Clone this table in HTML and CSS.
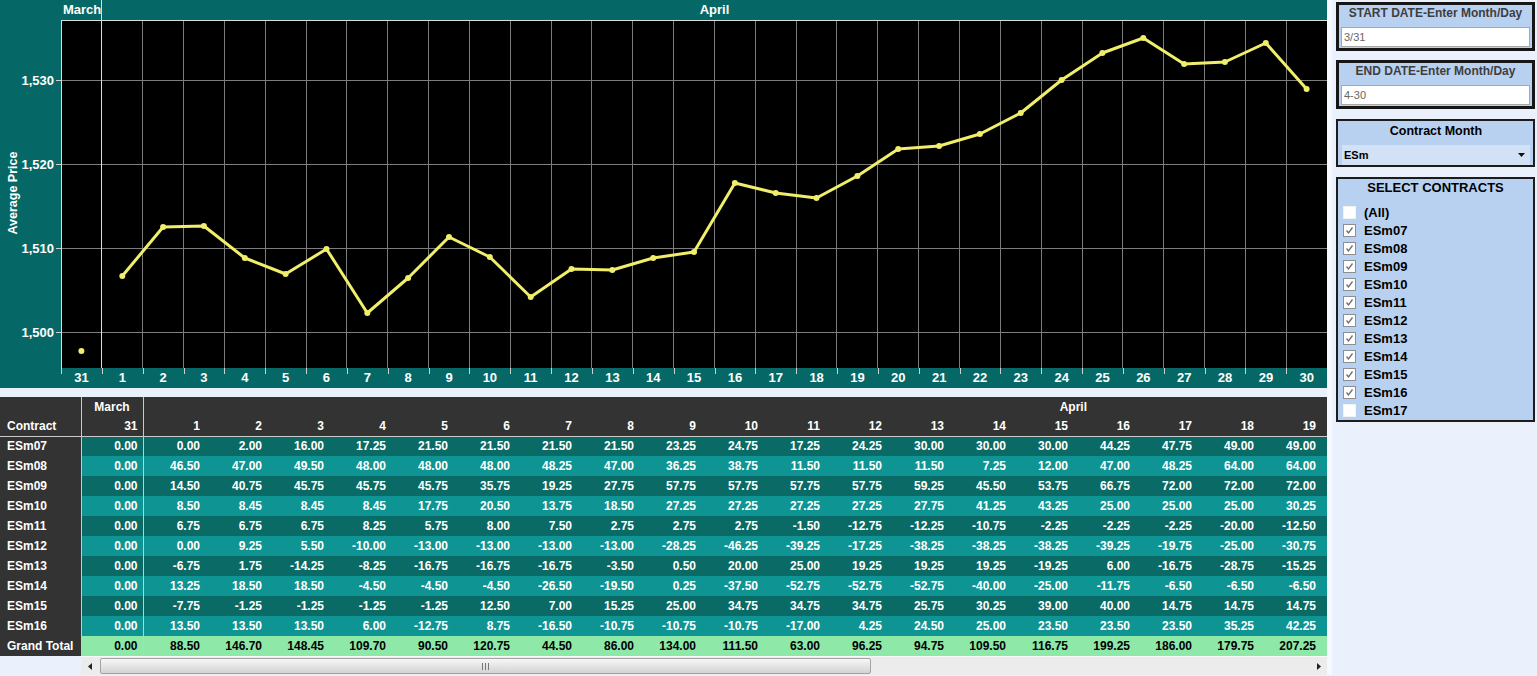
FILE: index.html
```html
<!DOCTYPE html>
<html>
<head>
<meta charset="utf-8">
<title>Average Price</title>
<link rel="stylesheet" href="styles.css">
</head>
<body>
<div class="page">
  <div class="main">
    <div class="chart">
      <div class="chart-head">
        <div class="head-march">March</div>
        <div class="head-april">April</div>
      </div>
      <svg class="yaxis" width="61" height="347" viewBox="0 0 61 347">
        <path d="M56 59.5H61M56 143.5H61M56 227.5H61M56 311.5H61" stroke="#d0d0d0" stroke-width="1"/>
        <g fill="#fff" font-size="13" font-weight="bold" text-anchor="end">
          <text x="54" y="64">1,530</text>
          <text x="54" y="148">1,520</text>
          <text x="54" y="232">1,510</text>
          <text x="54" y="316">1,500</text>
        </g>
        <text transform="translate(17,172) rotate(-90)" fill="#fff" font-size="12.5" font-weight="bold" text-anchor="middle">Average Price</text>
      </svg>
      <svg class="plot" width="1266" height="347" viewBox="0 0 1266 347">
        <rect x="0" y="0" width="1266" height="347" fill="#000"/>
        <path d="M0 59.5H1266M0 143.5H1266M0 227.5H1266M0 311.5H1266" stroke="#7c7c7c" stroke-width="1" shape-rendering="crispEdges"/>
        <path d="M81.5 0V347M122.5 0V347M163.5 0V347M204.5 0V347M245.5 0V347M285.5 0V347M326.5 0V347M367.5 0V347M408.5 0V347M449.5 0V347M490.5 0V347M530.5 0V347M571.5 0V347M612.5 0V347M653.5 0V347M694.5 0V347M735.5 0V347M775.5 0V347M816.5 0V347M857.5 0V347M898.5 0V347M939.5 0V347M980.5 0V347M1021.5 0V347M1061.5 0V347M1102.5 0V347M1143.5 0V347M1184.5 0V347M1225.5 0V347" stroke="#7c7c7c" stroke-width="1" shape-rendering="crispEdges"/>
        <path d="M0.5 0V347M40.5 0V347" stroke="#dcdcdc" stroke-width="1" shape-rendering="crispEdges"/>
        <polyline fill="none" stroke="#f0ee6a" stroke-width="3" stroke-linejoin="round" points="61.3,255 102.1,206 142.9,205 183.8,237 224.6,253 265.5,228 306.3,292 347.1,257 388.0,216 428.8,236 469.7,276 510.5,248 551.3,249 592.2,237 633.0,231 673.9,162 714.7,172 755.5,177 796.4,155 837.2,128 878.1,125 918.9,113 959.7,92 1000.6,59 1041.4,32 1082.3,17 1123.1,43 1163.9,41 1204.8,22 1245.6,68"/>
        <g fill="#f0ee6a">
          <circle cx="20.4" cy="330" r="3"/>
          <circle cx="61.3" cy="255" r="3"/><circle cx="102.1" cy="206" r="3"/><circle cx="142.9" cy="205" r="3"/>
          <circle cx="183.8" cy="237" r="3"/><circle cx="224.6" cy="253" r="3"/><circle cx="265.5" cy="228" r="3"/>
          <circle cx="306.3" cy="292" r="3"/><circle cx="347.1" cy="257" r="3"/><circle cx="388.0" cy="216" r="3"/>
          <circle cx="428.8" cy="236" r="3"/><circle cx="469.7" cy="276" r="3"/><circle cx="510.5" cy="248" r="3"/>
          <circle cx="551.3" cy="249" r="3"/><circle cx="592.2" cy="237" r="3"/><circle cx="633.0" cy="231" r="3"/>
          <circle cx="673.9" cy="162" r="3"/><circle cx="714.7" cy="172" r="3"/><circle cx="755.5" cy="177" r="3"/>
          <circle cx="796.4" cy="155" r="3"/><circle cx="837.2" cy="128" r="3"/><circle cx="878.1" cy="125" r="3"/>
          <circle cx="918.9" cy="113" r="3"/><circle cx="959.7" cy="92" r="3"/><circle cx="1000.6" cy="59" r="3"/>
          <circle cx="1041.4" cy="32" r="3"/><circle cx="1082.3" cy="17" r="3"/><circle cx="1123.1" cy="43" r="3"/>
          <circle cx="1163.9" cy="41" r="3"/><circle cx="1204.8" cy="22" r="3"/><circle cx="1245.6" cy="68" r="3"/>
        </g>
      </svg>
      <div class="xaxis">
        <span>31</span><span>1</span><span>2</span><span>3</span><span>4</span><span>5</span><span>6</span><span>7</span><span>8</span><span>9</span><span>10</span><span>11</span><span>12</span><span>13</span><span>14</span><span>15</span><span>16</span><span>17</span><span>18</span><span>19</span><span>20</span><span>21</span><span>22</span><span>23</span><span>24</span><span>25</span><span>26</span><span>27</span><span>28</span><span>29</span><span>30</span>
      </div>
    </div>

    <div class="table-wrap">
      <table class="grid">
        <colgroup>
          <col class="c-name"><col class="c-day"><col span="30" class="c-day">
        </colgroup>
        <thead>
          <tr class="h1">
            <th class="name sep" rowspan="2">Contract</th>
            <th class="mid sep">March</th>
            <th class="mid" colspan="30">April</th>
          </tr>
          <tr class="h2">
            <th class="sep">31</th>
            <th>1</th><th>2</th><th>3</th><th>4</th><th>5</th><th>6</th><th>7</th><th>8</th><th>9</th><th>10</th><th>11</th><th>12</th><th>13</th><th>14</th><th>15</th><th>16</th><th>17</th><th>18</th><th>19</th><th colspan="11"></th>
          </tr>
        </thead>
        <tbody>
          <tr class="dark first"><td class="name sep">ESm07</td><td class="sep">0.00</td><td>0.00</td><td>2.00</td><td>16.00</td><td>17.25</td><td>21.50</td><td>21.50</td><td>21.50</td><td>21.50</td><td>23.25</td><td>24.75</td><td>17.25</td><td>24.25</td><td>30.00</td><td>30.00</td><td>30.00</td><td>44.25</td><td>47.75</td><td>49.00</td><td>49.00</td><td colspan="11"></td></tr>
          <tr class="light"><td class="name sep">ESm08</td><td class="sep">0.00</td><td>46.50</td><td>47.00</td><td>49.50</td><td>48.00</td><td>48.00</td><td>48.00</td><td>48.25</td><td>47.00</td><td>36.25</td><td>38.75</td><td>11.50</td><td>11.50</td><td>11.50</td><td>7.25</td><td>12.00</td><td>47.00</td><td>48.25</td><td>64.00</td><td>64.00</td><td colspan="11"></td></tr>
          <tr class="dark"><td class="name sep">ESm09</td><td class="sep">0.00</td><td>14.50</td><td>40.75</td><td>45.75</td><td>45.75</td><td>45.75</td><td>35.75</td><td>19.25</td><td>27.75</td><td>57.75</td><td>57.75</td><td>57.75</td><td>57.75</td><td>59.25</td><td>45.50</td><td>53.75</td><td>66.75</td><td>72.00</td><td>72.00</td><td>72.00</td><td colspan="11"></td></tr>
          <tr class="light"><td class="name sep">ESm10</td><td class="sep">0.00</td><td>8.50</td><td>8.45</td><td>8.45</td><td>8.45</td><td>17.75</td><td>20.50</td><td>13.75</td><td>18.50</td><td>27.25</td><td>27.25</td><td>27.25</td><td>27.25</td><td>27.75</td><td>41.25</td><td>43.25</td><td>25.00</td><td>25.00</td><td>25.00</td><td>30.25</td><td colspan="11"></td></tr>
          <tr class="dark"><td class="name sep">ESm11</td><td class="sep">0.00</td><td>6.75</td><td>6.75</td><td>6.75</td><td>8.25</td><td>5.75</td><td>8.00</td><td>7.50</td><td>2.75</td><td>2.75</td><td>2.75</td><td>-1.50</td><td>-12.75</td><td>-12.25</td><td>-10.75</td><td>-2.25</td><td>-2.25</td><td>-2.25</td><td>-20.00</td><td>-12.50</td><td colspan="11"></td></tr>
          <tr class="light"><td class="name sep">ESm12</td><td class="sep">0.00</td><td>0.00</td><td>9.25</td><td>5.50</td><td>-10.00</td><td>-13.00</td><td>-13.00</td><td>-13.00</td><td>-13.00</td><td>-28.25</td><td>-46.25</td><td>-39.25</td><td>-17.25</td><td>-38.25</td><td>-38.25</td><td>-38.25</td><td>-39.25</td><td>-19.75</td><td>-25.00</td><td>-30.75</td><td colspan="11"></td></tr>
          <tr class="dark"><td class="name sep">ESm13</td><td class="sep">0.00</td><td>-6.75</td><td>1.75</td><td>-14.25</td><td>-8.25</td><td>-16.75</td><td>-16.75</td><td>-16.75</td><td>-3.50</td><td>0.50</td><td>20.00</td><td>25.00</td><td>19.25</td><td>19.25</td><td>19.25</td><td>-19.25</td><td>6.00</td><td>-16.75</td><td>-28.75</td><td>-15.25</td><td colspan="11"></td></tr>
          <tr class="light"><td class="name sep">ESm14</td><td class="sep">0.00</td><td>13.25</td><td>18.50</td><td>18.50</td><td>-4.50</td><td>-4.50</td><td>-4.50</td><td>-26.50</td><td>-19.50</td><td>0.25</td><td>-37.50</td><td>-52.75</td><td>-52.75</td><td>-52.75</td><td>-40.00</td><td>-25.00</td><td>-11.75</td><td>-6.50</td><td>-6.50</td><td>-6.50</td><td colspan="11"></td></tr>
          <tr class="dark"><td class="name sep">ESm15</td><td class="sep">0.00</td><td>-7.75</td><td>-1.25</td><td>-1.25</td><td>-1.25</td><td>-1.25</td><td>12.50</td><td>7.00</td><td>15.25</td><td>25.00</td><td>34.75</td><td>34.75</td><td>34.75</td><td>25.75</td><td>30.25</td><td>39.00</td><td>40.00</td><td>14.75</td><td>14.75</td><td>14.75</td><td colspan="11"></td></tr>
          <tr class="light"><td class="name sep">ESm16</td><td class="sep">0.00</td><td>13.50</td><td>13.50</td><td>13.50</td><td>6.00</td><td>-12.75</td><td>8.75</td><td>-16.50</td><td>-10.75</td><td>-10.75</td><td>-10.75</td><td>-17.00</td><td>4.25</td><td>24.50</td><td>25.00</td><td>23.50</td><td>23.50</td><td>23.50</td><td>35.25</td><td>42.25</td><td colspan="11"></td></tr>
          <tr class="total"><td class="name sep">Grand Total</td><td class="sep">0.00</td><td>88.50</td><td>146.70</td><td>148.45</td><td>109.70</td><td>90.50</td><td>120.75</td><td>44.50</td><td>86.00</td><td>134.00</td><td>111.50</td><td>63.00</td><td>96.25</td><td>94.75</td><td>109.50</td><td>116.75</td><td>199.25</td><td>186.00</td><td>179.75</td><td>207.25</td><td colspan="11"></td></tr>
        </tbody>
      </table>
    </div>

    <div class="hscroll">
      <div class="sb-btn"><svg width="4" height="7" viewBox="0 0 4 7"><polygon points="4,0 4,7 0,3.5" fill="#222"/></svg></div>
      <div class="sb-thumb"><svg width="7" height="7" viewBox="0 0 7 7"><path d="M0.5 0V7M3.5 0V7M6.5 0V7" stroke="#777" stroke-width="1"/></svg></div>
      <div class="sb-btn sb-right"><svg width="4" height="7" viewBox="0 0 4 7"><polygon points="0,0 0,7 4,3.5" fill="#222"/></svg></div>
    </div>
  </div>

  <aside class="side">
    <section class="box box-date">
      <div class="box-title gray">START DATE-Enter Month/Day</div>
      <div class="text-input">3/31</div>
    </section>
    <section class="box box-date">
      <div class="box-title gray">END DATE-Enter Month/Day</div>
      <div class="text-input">4-30</div>
    </section>
    <section class="box box-month">
      <div class="box-title">Contract Month</div>
      <div class="dropdown"><span>ESm</span><svg width="7" height="4" viewBox="0 0 7 4"><polygon points="0,0 7,0 3.5,4" fill="#111"/></svg></div>
    </section>
    <section class="box box-select">
      <div class="box-title big">SELECT CONTRACTS</div>
      <ul class="checks">
        <li><span class="cb"></span>(All)</li>
        <li><span class="cb on"><svg width="11" height="11" viewBox="0 0 11 11"><path d="M2.5 5.5L4.5 8L8.5 2.5" fill="none" stroke="#6e6e6e" stroke-width="1.3"/></svg></span>ESm07</li>
        <li><span class="cb on"><svg width="11" height="11" viewBox="0 0 11 11"><path d="M2.5 5.5L4.5 8L8.5 2.5" fill="none" stroke="#6e6e6e" stroke-width="1.3"/></svg></span>ESm08</li>
        <li><span class="cb on"><svg width="11" height="11" viewBox="0 0 11 11"><path d="M2.5 5.5L4.5 8L8.5 2.5" fill="none" stroke="#6e6e6e" stroke-width="1.3"/></svg></span>ESm09</li>
        <li><span class="cb on"><svg width="11" height="11" viewBox="0 0 11 11"><path d="M2.5 5.5L4.5 8L8.5 2.5" fill="none" stroke="#6e6e6e" stroke-width="1.3"/></svg></span>ESm10</li>
        <li><span class="cb on"><svg width="11" height="11" viewBox="0 0 11 11"><path d="M2.5 5.5L4.5 8L8.5 2.5" fill="none" stroke="#6e6e6e" stroke-width="1.3"/></svg></span>ESm11</li>
        <li><span class="cb on"><svg width="11" height="11" viewBox="0 0 11 11"><path d="M2.5 5.5L4.5 8L8.5 2.5" fill="none" stroke="#6e6e6e" stroke-width="1.3"/></svg></span>ESm12</li>
        <li><span class="cb on"><svg width="11" height="11" viewBox="0 0 11 11"><path d="M2.5 5.5L4.5 8L8.5 2.5" fill="none" stroke="#6e6e6e" stroke-width="1.3"/></svg></span>ESm13</li>
        <li><span class="cb on"><svg width="11" height="11" viewBox="0 0 11 11"><path d="M2.5 5.5L4.5 8L8.5 2.5" fill="none" stroke="#6e6e6e" stroke-width="1.3"/></svg></span>ESm14</li>
        <li><span class="cb on"><svg width="11" height="11" viewBox="0 0 11 11"><path d="M2.5 5.5L4.5 8L8.5 2.5" fill="none" stroke="#6e6e6e" stroke-width="1.3"/></svg></span>ESm15</li>
        <li><span class="cb on"><svg width="11" height="11" viewBox="0 0 11 11"><path d="M2.5 5.5L4.5 8L8.5 2.5" fill="none" stroke="#6e6e6e" stroke-width="1.3"/></svg></span>ESm16</li>
        <li><span class="cb"></span>ESm17</li>
      </ul>
    </section>
  </aside>
</div>
</body>
</html>
```
FILE: styles.css
```css
* { box-sizing: border-box; }

html, body {
  margin: 0;
  padding: 0;
}

body {
  background: #eaf1fc;
  font-family: "Liberation Sans", Arial, sans-serif;
  width: 1537px;
  height: 676px;
  overflow: hidden;
}

.page {
  display: flex;
  gap: 4px;
}

.main {
  width: 1332px;
  flex: 0 0 1332px;
  border-right: 5px solid #f5f8fe;
  display: flex;
  flex-direction: column;
}

/* ---------- chart ---------- */
.chart {
  display: grid;
  grid-template-columns: 61px 1266px;
  grid-template-rows: 21px 347px 20px;
  background: #066866;
  color: #fff;
  font-weight: bold;
}

.chart-head {
  grid-column: 2;
  grid-row: 1;
  display: flex;
  border-bottom: 1px solid #dcdcdc;
  font-size: 13px;
  line-height: 20px;
}

.head-march {
  width: 41px;
  padding-left: 2px;
  border-right: 1px solid #dcdcdc;
}

.head-april {
  flex: 1;
  text-align: center;
}

.yaxis {
  grid-column: 1;
  grid-row: 2;
  display: block;
}

.plot {
  grid-column: 2;
  grid-row: 2;
  display: block;
}

.xaxis {
  grid-column: 2;
  grid-row: 3;
  display: flex;
}

.xaxis span {
  flex: 1;
  text-align: center;
  font-size: 13px;
  line-height: 20px;
  background: linear-gradient(#cfcfcf, #cfcfcf) left top / 1px 6px no-repeat;
}

/* ---------- table ---------- */
.table-wrap {
  margin-top: 9px;
  width: 1327px;
  overflow: hidden;
  background: #333;
}

.grid {
  table-layout: fixed;
  width: 2003px;
  border-collapse: collapse;
  font-size: 12px;
  font-weight: bold;
  color: #fff;
}

.c-name { width: 81px; }
.c-day { width: 62px; }

.grid th,
.grid td {
  padding: 0 5px 0 0;
  text-align: right;
  white-space: nowrap;
  overflow: hidden;
  line-height: 14px;
}

.grid thead th {
  background: #333;
}

.grid tr.h1 { height: 19px; }
.grid tr.h2 { height: 20px; }
.grid tbody tr { height: 20px; }

.grid th.mid {
  text-align: center;
  padding: 0;
}

.grid .name {
  text-align: left;
  padding: 0 0 0 7px;
  background: #333;
}

.grid th.name {
  vertical-align: bottom;
  padding-bottom: 3px;
}

.grid .sep {
  border-right: 1px solid #c9c9c9;
}

.grid tr.first td {
  border-top: 1px solid #c9c9c9;
}

.grid tr.dark td { background: #0a6a66; }
.grid tr.light td { background: #0f9494; }
.grid tr.total td { background: #8ee8a8; color: #000; }
.grid tr td.name { background: #333; color: #fff; }

/* ---------- scrollbar ---------- */
.hscroll {
  margin-left: 81px;
  width: 1246px;
  height: 19px;
  background: #ececec;
  border-top: 1px solid #fafafa;
  display: flex;
  align-items: center;
}

.sb-btn {
  width: 17px;
  height: 17px;
  display: flex;
  align-items: center;
  justify-content: center;
}

.sb-right {
  margin-left: auto;
}

.sb-thumb {
  margin-left: 2px;
  width: 771px;
  height: 16px;
  border: 1px solid #a3a3a3;
  border-radius: 2px;
  background: linear-gradient(#f7f7f7, #d3d3d3);
  display: flex;
  align-items: center;
  justify-content: center;
}

/* ---------- side panel ---------- */
.side {
  width: 199px;
  padding-top: 2px;
  display: flex;
  flex-direction: column;
  gap: 9px;
}

.box {
  background: #b9d1f1;
  border: 2px solid #1c1c1c;
}

.box-title {
  font-size: 12px;
  font-weight: bold;
  color: #000;
  text-align: center;
  line-height: 16px;
}

.box-title.gray { color: #3e3e3e; }

.box-date {
  height: 49px;
  border-width: 3px;
  border-color: #161616;
  padding: 0 2px;
}

.text-input {
  margin-top: 6px;
  height: 20px;
  background: #fff;
  border: 1px solid #a8a8a8;
  font-size: 11px;
  color: #666;
  line-height: 18px;
  padding-left: 2px;
}

.box-month {
  margin-top: 1px;
  height: 48px;
  padding: 2px 3px 0 4px;
}

.box-month .box-title {
  font-size: 12.5px;
}

.dropdown {
  margin-top: 6px;
  height: 20px;
  background: #d2e1f6;
  display: flex;
  align-items: center;
  justify-content: space-between;
  padding: 0 5px 0 2px;
  font-size: 11px;
  font-weight: bold;
  color: #000;
}

.box-select {
  margin-top: 1px;
  height: 245px;
  padding: 0 0 0 5px;
}

.box-title.big {
  font-size: 13px;
  line-height: 18px;
  padding-right: 5px;
}

.checks {
  list-style: none;
  margin: 6px 0 0;
  padding: 0;
}

.checks li {
  height: 18px;
  display: flex;
  align-items: center;
  gap: 8px;
  font-size: 13px;
  font-weight: bold;
  color: #000;
}

.cb {
  width: 13px;
  height: 13px;
  background: #fff;
  border: 1px solid #f3f3f3;
  display: flex;
  align-items: center;
  justify-content: center;
}

.cb.on {
  border-color: #8e8f8f;
}
```
